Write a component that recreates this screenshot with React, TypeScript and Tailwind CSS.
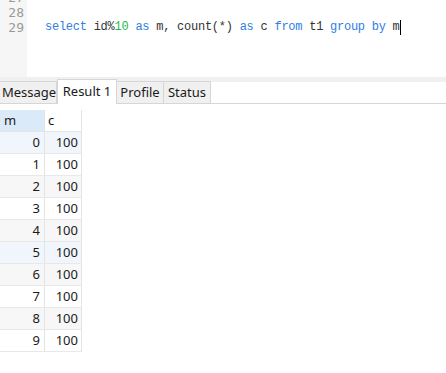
import React from "react";

const kw = "text-[#2f7ee6]";
const id = "text-[#333333]";

export default function App() {
  const rows = [0, 1, 2, 3, 4, 5, 6, 7, 8, 9];
  const rowBg = (i: number) =>
    i === 0 || i === 5 ? "bg-[#f0f6fc]" : i % 2 === 0 ? "bg-[#f7f7f7]" : "bg-white";
  return (
    <div className="w-[446px] h-[373px] bg-white overflow-hidden flex flex-col" style={{ fontFamily: '"Noto Sans", "Noto Sans CJK SC", sans-serif' }}>
      {/* Editor */}
      <div className="h-[77px] flex shrink-0 overflow-hidden">
        <div
          className="w-[27px] bg-[#f6f6f6] flex flex-col items-end pr-[3px] text-[#9a9a9a] text-[13px] leading-[15px] -mt-[10px]"
          style={{ fontFamily: '"DejaVu Sans Mono", monospace' }}
        >
          <div className="h-[15px]">27</div>
          <div className="h-[15px]">28</div>
          <div className="h-[15px]">29</div>
        </div>
        <div className="flex-1 relative">
          <div
            className="absolute left-[18px] top-[20px] text-[12px] leading-[15px] tracking-[-0.25px] whitespace-pre"
            style={{ fontFamily: '"Liberation Mono", monospace' }}
          >
            <span className={kw}>select</span>
            <span className={id}> id%</span>
            <span className="text-[#1fb84a]">10</span>
            <span className={kw}> as</span>
            <span className={id}> m, count(*)</span>
            <span className={kw}> as</span>
            <span className={id}> c</span>
            <span className={kw}> from</span>
            <span className={id}> t1</span>
            <span className={kw}> group by</span>
            <span className={id}> m</span>
            <span className="inline-block w-[1px] h-[15px] bg-black align-top" />
          </div>
        </div>
      </div>
      {/* band */}
      <div className="h-[5px] bg-[#f0f0f0] shrink-0" />
      {/* Tabs */}
      <div className="h-[22px] flex items-end border-b border-[#d6d6d6] shrink-0 relative text-[13px] text-[#1a1a1a]">
        <div className="h-[22px] -ml-[3px] w-[60px] pl-[4px] bg-[#f0f0f0] border border-b-0 border-[#d6d6d6] flex items-center leading-none">Message</div>
        <div className="h-[25px] w-[60px] -mb-[1px] mt-[-3px] bg-white border border-b-0 border-[#d6d6d6] flex items-start pt-[3px] justify-center leading-[16px]">Result 1</div>
        <div className="h-[22px] w-[47px] bg-[#f0f0f0] border border-l-0 border-b-0 border-[#d6d6d6] flex items-center justify-center leading-none">Profile</div>
        <div className="h-[22px] w-[47px] bg-[#f0f0f0] border border-l-0 border-b-0 border-[#d6d6d6] flex items-center justify-center leading-none">Status</div>
      </div>
      {/* gap */}
      <div className="h-[6px] shrink-0" />
      {/* Grid */}
      <div className="w-[82px] text-[13px] text-[#1a1a1a]">
        <div className="flex h-[22px] border-b border-[#e4e4e4]">
          <div className="w-[45px] bg-[#daeaf8] border-r border-[#e4e4e4] pl-[4px] flex items-center">m</div>
          <div className="w-[37px] border-r border-[#e4e4e4] pl-[3px] flex items-center">c</div>
        </div>
        {rows.map((r) => (
          <div key={r} className={`flex h-[22px] border-b border-[#e8e8e8] ${rowBg(r)}`}>
            <div className="w-[45px] border-r border-[#e4e4e4] pr-[4px] flex items-center justify-end">{r}</div>
            <div className="w-[37px] border-r border-[#e4e4e4] pr-[3px] flex items-center justify-end">100</div>
          </div>
        ))}
      </div>
    </div>
  );
}
